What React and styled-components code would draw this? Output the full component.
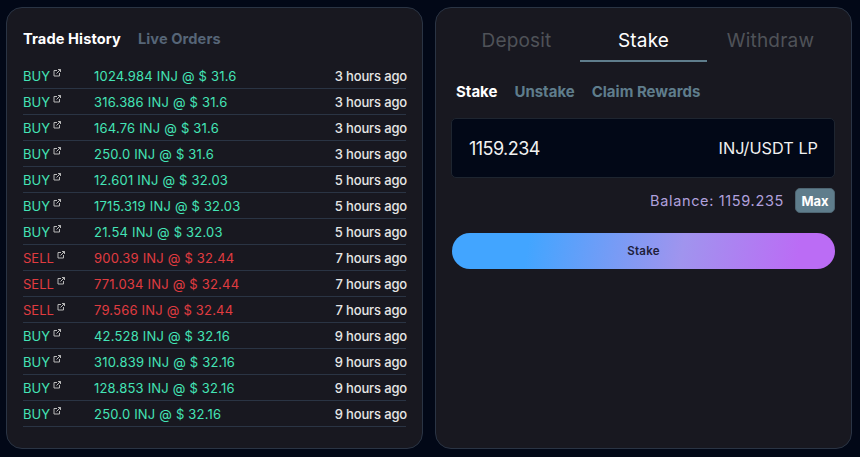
import React from "react";
import styled, { createGlobalStyle } from "styled-components";

const TRADES = [
  ["BUY", "1024.984 INJ @ $ 31.6", "3 hours ago"],
  ["BUY", "316.386 INJ @ $ 31.6", "3 hours ago"],
  ["BUY", "164.76 INJ @ $ 31.6", "3 hours ago"],
  ["BUY", "250.0 INJ @ $ 31.6", "3 hours ago"],
  ["BUY", "12.601 INJ @ $ 32.03", "5 hours ago"],
  ["BUY", "1715.319 INJ @ $ 32.03", "5 hours ago"],
  ["BUY", "21.54 INJ @ $ 32.03", "5 hours ago"],
  ["SELL", "900.39 INJ @ $ 32.44", "7 hours ago"],
  ["SELL", "771.034 INJ @ $ 32.44", "7 hours ago"],
  ["SELL", "79.566 INJ @ $ 32.44", "7 hours ago"],
  ["BUY", "42.528 INJ @ $ 32.16", "9 hours ago"],
  ["BUY", "310.839 INJ @ $ 32.16", "9 hours ago"],
  ["BUY", "128.853 INJ @ $ 32.16", "9 hours ago"],
  ["BUY", "250.0 INJ @ $ 32.16", "9 hours ago"],
];

const GlobalStyle = createGlobalStyle`
  html, body {
    margin: 0;
    background: #020817;
    font-family: "Inter", "Noto Sans", sans-serif;
  }
  * { box-sizing: border-box; }
`;

const Page = styled.div`
  width: 860px;
  height: 457px;
  padding: 7px 8px 8px 6px;
  display: grid;
  grid-template-columns: 417px 417px;
  column-gap: 12px;
  background: #020817;
  overflow: hidden;
`;

const Panel = styled.section`
  background: #181820;
  border: 1px solid #2a3444;
  border-radius: 16px;
`;

const HistoryPanel = styled(Panel)`
  padding: 21px 16px 0 16px;
`;

const HistoryTabs = styled.div`
  display: flex;
  gap: 17px;
  height: 34px;
`;

const HistoryTab = styled.span`
  font-size: 14.6px;
  line-height: 20px;
  font-weight: 700;
  letter-spacing: 0.1px;
  color: ${(p) => (p.$active ? "#ffffff" : "#566577")};
`;

const Row = styled.div`
  display: flex;
  align-items: center;
  height: 26px;
  border-bottom: 1px solid #2a3444;
  font-size: 13px;
`;

const Side = styled.span`
  width: 71px;
  display: flex;
  align-items: flex-start;
  gap: 3px;
  color: ${(p) => (p.$sell ? "#e03c40" : "#44e4b6")};
`;

const Amount = styled.span`
  flex: 1;
  letter-spacing: 0.2px;
  color: ${(p) => (p.$sell ? "#e03c40" : "#44e4b6")};
`;

const Time = styled.span`
  margin-right: -1px;
  font-weight: 500;
  letter-spacing: -0.15px;
  color: #e6e6e6;
`;

const LinkIcon = () => (
  <svg width="8" height="8" viewBox="0 0 8 8" fill="none" stroke="#b8b8b8" strokeWidth="1" style={{ marginTop: 1 }}>
    <path d="M4 1.5H1V7H6.5V4" />
    <path d="M3.5 4.5L7.5 0.5M5 0.5H7.5V3" />
  </svg>
);

const StakePanel = styled(Panel)`
  padding: 13px 16px 0 15px;
`;

const MainTabs = styled.div`
  display: grid;
  grid-template-columns: repeat(3, 127px);
  margin-left: 2px;
`;

const MainTab = styled.div`
  height: 41px;
  padding-top: 8px;
  text-align: center;
  font-size: 19px;
  line-height: 24px;
  letter-spacing: 0.2px;
  color: ${(p) => (p.$active ? "#ffffff" : "#4f5258")};
  border-bottom: 2px solid ${(p) => (p.$active ? "#5f7d8c" : "transparent")};
`;

const SubTabs = styled.div`
  display: flex;
  gap: 17px;
  margin: 20px 0 0 5px;
  height: 20px;
`;

const SubTab = styled.span`
  font-size: 15px;
  line-height: 20px;
  font-weight: 700;
  color: ${(p) => (p.$active ? "#ffffff" : "#5f7d8c")};
`;

const InputBox = styled.div`
  height: 60px;
  margin-top: 16px;
  padding: 0 16px 0 17px;
  display: flex;
  align-items: center;
  justify-content: space-between;
  background: #020817;
  border: 1px solid #1e2530;
  border-radius: 5px;
  color: #f1f1f1;
`;

const AmountValue = styled.span`
  font-size: 18px;
  letter-spacing: -0.55px;
`;

const Unit = styled.span`
  font-size: 16.3px;
`;

const BalanceRow = styled.div`
  display: flex;
  justify-content: flex-end;
  align-items: center;
  gap: 11px;
  margin-top: 10px;
`;

const Balance = styled.span`
  font-size: 14.5px;
  letter-spacing: 0.65px;
  color: #b0a0dc;
`;

const MaxButton = styled.button`
  width: 40px;
  height: 25px;
  padding: 0;
  font: 700 13px "Inter", sans-serif;
  color: #ffffff;
  background: #5f7d8c;
  border: 1px solid #4e6572;
  border-radius: 5px;
`;

const StakeButton = styled.button`
  display: block;
  width: 383px;
  height: 36px;
  margin: 20px 0 0 1px;
  font: 600 11.5px "Inter", sans-serif;
  letter-spacing: 0.2px;
  color: #20203a;
  border: 0;
  border-radius: 18px;
  background: linear-gradient(100deg, #42a5ff 20%, #a094ee 60%, #bb6cf5 90%);
`;

export default function App() {
  return (
    <>
      <GlobalStyle />
      <Page>
        <HistoryPanel>
          <HistoryTabs>
            <HistoryTab $active>Trade History</HistoryTab>
            <HistoryTab>Live Orders</HistoryTab>
          </HistoryTabs>
          {TRADES.map(([side, amount, time], i) => (
            <Row key={i}>
              <Side $sell={side === "SELL"}>
                {side}
                <LinkIcon />
              </Side>
              <Amount $sell={side === "SELL"}>{amount}</Amount>
              <Time>{time}</Time>
            </Row>
          ))}
        </HistoryPanel>
        <StakePanel>
          <MainTabs>
            <MainTab>Deposit</MainTab>
            <MainTab $active>Stake</MainTab>
            <MainTab>Withdraw</MainTab>
          </MainTabs>
          <SubTabs>
            <SubTab $active>Stake</SubTab>
            <SubTab>Unstake</SubTab>
            <SubTab>Claim Rewards</SubTab>
          </SubTabs>
          <InputBox>
            <AmountValue>1159.234</AmountValue>
            <Unit>INJ/USDT LP</Unit>
          </InputBox>
          <BalanceRow>
            <Balance>Balance: 1159.235</Balance>
            <MaxButton>Max</MaxButton>
          </BalanceRow>
          <StakeButton>Stake</StakeButton>
        </StakePanel>
      </Page>
    </>
  );
}
